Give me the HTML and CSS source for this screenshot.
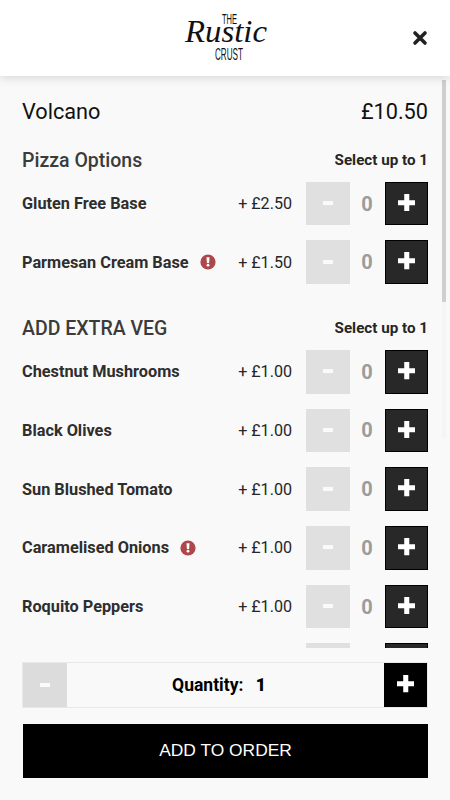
FILE: index.html
```html
<!DOCTYPE html>
<html lang="en">
  <head>
    <meta charset="UTF-8" />
    <meta name="viewport" content="width=device-width, initial-scale=1.0" />
    <title>The Rustic Crust</title>
    <link rel="stylesheet" href="styles.css">
  </head>

  <body>
    <svg class="sprite">
      <symbol id="plus" viewBox="0 0 18 18">
        <path d="M6.4 0h5.2v6.4H18v5.2h-6.4V18H6.4v-6.4H0V6.4h6.4z" />
      </symbol>
      <symbol id="alert" viewBox="0 0 16 16">
        <circle cx="8" cy="8" r="7.6" fill="#ae474b" />
        <path d="M6.5 3.3h3l-.4 5.6H6.9z" fill="#fff" />
        <circle cx="8" cy="11.2" r="1.4" fill="#fff" />
      </symbol>
    </svg>

    <header class="header">
      <svg class="logo" width="90" height="60" viewBox="0 0 90 60">
        <text class="logo-small" x="42" y="16" textLength="15" lengthAdjust="spacingAndGlyphs">THE</text>
        <text class="logo-script" x="5" y="34" textLength="82" lengthAdjust="spacingAndGlyphs">Rustic</text>
        <text class="logo-small crust" x="35" y="52" textLength="28" lengthAdjust="spacingAndGlyphs">CRUST</text>
      </svg>
      <button class="close" aria-label="Close">
        <svg width="16" height="16" viewBox="0 0 16 16">
          <path d="M3 3l10 10M13 3L3 13" />
        </svg>
      </button>
    </header>

    <main class="options">
      <div class="product">
        <span class="product-name">Volcano</span>
        <span class="product-price">£10.50</span>
      </div>

      <section class="group">
        <div class="group-head">
          <h2>Pizza Options</h2>
          <span>Select up to 1</span>
        </div>
        <div class="row">
          <span class="name">Gluten Free Base</span>
          <span class="price">+ £2.50</span>
          <button class="minus"><i></i></button>
          <span class="count">0</span>
          <button class="plus"><svg><use href="#plus" /></svg></button>
        </div>
        <div class="row">
          <span class="name">Parmesan Cream Base <svg class="alert"><use href="#alert" /></svg></span>
          <span class="price">+ £1.50</span>
          <button class="minus"><i></i></button>
          <span class="count">0</span>
          <button class="plus"><svg><use href="#plus" /></svg></button>
        </div>
      </section>

      <section class="group">
        <div class="group-head">
          <h2>ADD EXTRA VEG</h2>
          <span>Select up to 1</span>
        </div>
        <div class="row">
          <span class="name">Chestnut Mushrooms</span>
          <span class="price">+ £1.00</span>
          <button class="minus"><i></i></button>
          <span class="count">0</span>
          <button class="plus"><svg><use href="#plus" /></svg></button>
        </div>
        <div class="row">
          <span class="name">Black Olives</span>
          <span class="price">+ £1.00</span>
          <button class="minus"><i></i></button>
          <span class="count">0</span>
          <button class="plus"><svg><use href="#plus" /></svg></button>
        </div>
        <div class="row">
          <span class="name">Sun Blushed Tomato</span>
          <span class="price">+ £1.00</span>
          <button class="minus"><i></i></button>
          <span class="count">0</span>
          <button class="plus"><svg><use href="#plus" /></svg></button>
        </div>
        <div class="row">
          <span class="name">Caramelised Onions <svg class="alert"><use href="#alert" /></svg></span>
          <span class="price">+ £1.00</span>
          <button class="minus"><i></i></button>
          <span class="count">0</span>
          <button class="plus"><svg><use href="#plus" /></svg></button>
        </div>
        <div class="row">
          <span class="name">Roquito Peppers</span>
          <span class="price">+ £1.00</span>
          <button class="minus"><i></i></button>
          <span class="count">0</span>
          <button class="plus"><svg><use href="#plus" /></svg></button>
        </div>
        <div class="row">
          <span class="name"></span>
          <button class="minus"></button>
          <span class="count"></span>
          <button class="plus"></button>
        </div>
      </section>
      <div class="scrollbar"><div class="thumb"></div></div>
    </main>

    <footer class="footer">
      <div class="quantity">
        <button class="minus"><i></i></button>
        <span class="quantity-label">Quantity: <b>1</b></span>
        <button class="plus"><svg><use href="#plus" /></svg></button>
      </div>
      <button class="add">ADD TO ORDER</button>
    </footer>
  </body>
</html>
```
FILE: styles.css
```css
* {
  box-sizing: border-box;
}

body {
  display: flex;
  flex-direction: column;
  height: 800px;
  margin: 0;
  overflow: hidden;
  background: #f9f9f9;
  color: #262626;
  font-family: Roboto, Arial, sans-serif;
}

button {
  display: flex;
  align-items: center;
  justify-content: center;
  flex: none;
  padding: 0;
  border: 0;
  font-family: inherit;
}

.sprite {
  position: absolute;
  width: 0;
  height: 0;
}

.header {
  display: grid;
  grid-template-columns: 1fr 90px 1fr;
  align-items: center;
  flex: none;
  height: 76px;
  padding-right: 22px;
  padding-left: 22px;
  background: #fff;
  box-shadow: 0 1px 10px rgba(0, 0, 0, 0.17);
  z-index: 1;
}

.logo {
  grid-column: 2;
  overflow: visible;
}

.logo-small {
  font: 15px "Liberation Sans Narrow", "Liberation Sans", sans-serif;
  fill: #111;
}

.logo-small.crust {
  font-size: 16.5px;
}

.logo-script {
  font: italic 31px "Liberation Serif", serif;
  fill: #111;
}

.close {
  justify-self: end;
  background: none;
}

.close path {
  fill: none;
  stroke: #222;
  stroke-width: 3.6;
  stroke-linecap: round;
}

.options {
  position: relative;
  flex: none;
  height: 572px;
  padding: 17px 22px 0;
  overflow: hidden;
}

.product {
  display: flex;
  align-items: center;
  justify-content: space-between;
  height: 36px;
  color: #111;
  font-size: 21.7px;
}

.group {
  padding-top: 19px;
}

.group + .group {
  padding-top: 24.7px;
}

.group-head {
  display: flex;
  align-items: center;
  justify-content: space-between;
  height: 24px;
  margin-bottom: 2.2px;
}

.group-head h2 {
  margin: 0;
  color: #3b3b3b;
  font-size: 19.5px;
  font-weight: 500;
}

.group-head span {
  font-size: 15.2px;
  font-weight: 700;
}

.row {
  display: flex;
  align-items: center;
  height: 58.7px;
}

.name {
  display: flex;
  align-items: center;
  flex: 1;
  color: #2e2e2e;
  font-size: 16.3px;
  font-weight: 700;
}

.alert {
  width: 16px;
  height: 16px;
  margin-left: 11px;
}

.price {
  margin-right: 14px;
  font-size: 16.1px;
}

.minus,
.plus {
  width: 43.5px;
  height: 43.5px;
}

.minus {
  background: #e0e0e0;
}

.minus i {
  width: 10px;
  height: 4px;
  margin-bottom: 1px;
  background: #fafafa;
}

.plus {
  border: 1px solid #000;
  background: #282828;
}

.plus svg {
  width: 17.5px;
  height: 17.5px;
  margin-bottom: 2px;
  fill: #fff;
}

.count {
  width: 35px;
  color: #9c9c9c;
  font-size: 20px;
  font-weight: 700;
  text-align: center;
}

.scrollbar {
  position: absolute;
  top: 4px;
  right: 4px;
  width: 4px;
  height: 359px;
  background: #f5f5f5;
}

.thumb {
  height: 222px;
  background: #cfcfcf;
}

.footer {
  padding: 14px 22px 0;
}

.quantity {
  display: flex;
  align-items: center;
  height: 46px;
  border: 1px solid #e8e8e8;
}

.quantity .minus,
.quantity .plus {
  height: 44px;
}

.quantity .minus {
  background: #dcdcdc;
}

.quantity .plus {
  background: #000;
}

.quantity-label {
  flex: 1;
  padding-right: 12px;
  color: #000;
  font-size: 17.5px;
  font-weight: 700;
  text-align: center;
}

.quantity-label b {
  margin-left: 8px;
}

.add {
  width: 405px;
  height: 54px;
  margin: 16px 0 0 1px;
  padding-bottom: 1px;
  background: #000;
  color: #fff;
  font-family: "Liberation Sans", Arial, sans-serif;
  font-size: 17.4px;
}
```
